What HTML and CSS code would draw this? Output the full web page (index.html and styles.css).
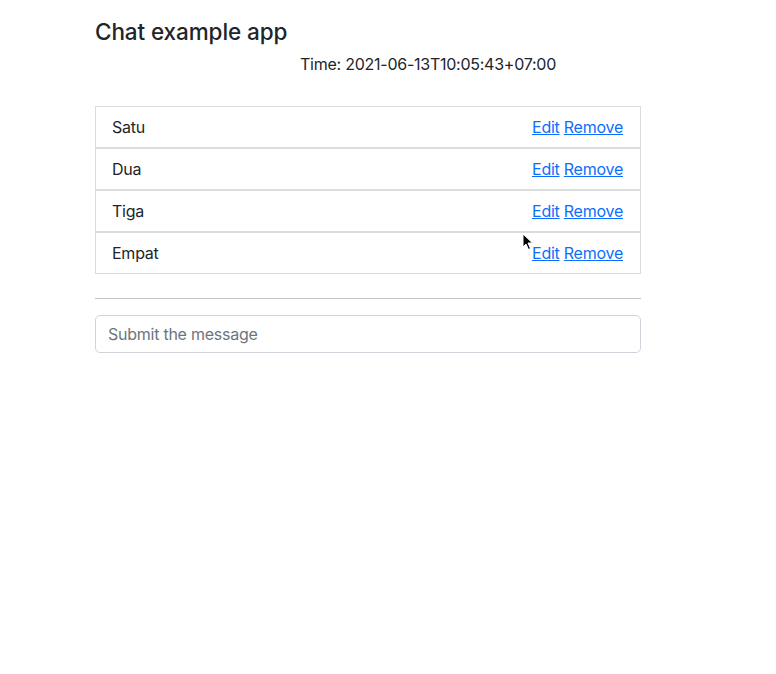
FILE: index.html
```html
<!DOCTYPE html>
<html>
<head>
<meta charset="utf-8">
<link rel="stylesheet" href="styles.css">
</head>
<body>
<div class="container">
  <h4 class="title">Chat example app</h4>
  <div class="time">Time: 2021-06-13T10:05:43+07:00</div>
  <ul class="list">
    <li class="item"><span>Satu</span><span class="actions"><a href="#">Edit</a> <a href="#">Remove</a></span></li>
    <li class="item"><span>Dua</span><span class="actions"><a href="#">Edit</a> <a href="#">Remove</a></span></li>
    <li class="item"><span>Tiga</span><span class="actions"><a href="#">Edit</a> <a href="#">Remove</a></span></li>
    <li class="item"><span>Empat</span><span class="actions"><a href="#">Edit</a> <a href="#">Remove</a></span></li>
  </ul>
  <hr class="divider">
  <input class="input" type="text" placeholder="Submit the message">
</div>
<svg class="cursor" width="12" height="18" viewBox="0 0 12 18"><path d="M1 1 L1 14 L4 11 L6.5 16.5 L8.5 15.5 L6 10 L10.5 10 Z" fill="#000" stroke="#fff" stroke-width="1"/></svg>
</body>
</html>
```
FILE: styles.css
```css
html, body { margin: 0; padding: 0; background: #fff; }
body {
  font-family: Inter, "Noto Sans", "Liberation Sans", sans-serif;
  font-size: 16px;
  line-height: 1.5;
  color: #212529;
  letter-spacing: -0.25px;
  position: relative;
}
.container {
  width: 546px;
  margin-left: 95px;
  padding-top: 18px;
}
.title {
  margin: 0;
  font-size: 22.5px;
  font-weight: 500;
  line-height: 1.2;
  letter-spacing: -0.1px;
}
.time {
  margin-top: 7px;
  padding-left: 205px;
  font-size: 16px;
  line-height: 24px;
}
.list {
  list-style: none;
  margin: 30px 0 0 0;
  padding: 0;
}
.item {
  display: flex;
  justify-content: space-between;
  align-items: center;
  border: 1px solid #dcdcdc;
  padding: 8px 17px 8px 16px;
  line-height: 24px;
}
.actions a { color: #0d6efd; text-decoration: underline; }
.divider {
  margin: 24px 0 16px 0;
  border: 0;
  border-top: 1px solid #c4c4c4;
  height: 0;
}
.input {
  display: block;
  box-sizing: border-box;
  width: 100%;
  height: 38px;
  padding: 6px 12px;
  font-family: inherit;
  font-size: 16px;
  letter-spacing: -0.25px;
  color: #212529;
  border: 1px solid #ced4da;
  border-radius: 5px;
  outline: none;
}
.input::placeholder { color: #6c757d; }
.cursor { position: absolute; left: 522px; top: 233px; }
```
